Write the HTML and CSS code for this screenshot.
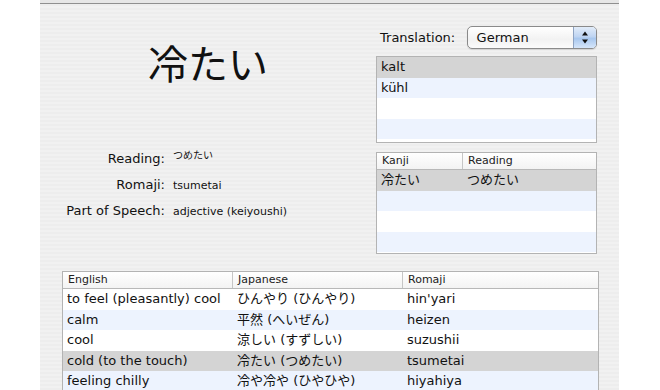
FILE: index.html
```html
<!DOCTYPE html>
<html lang="ja">
<head>
<meta charset="utf-8">
<title>冷たい</title>
<link rel="stylesheet" href="styles.css">
</head>
<body>
<div class="panel">
  <div class="topline"></div>
  <div class="top">
    <div class="left">
      <div class="title">冷たい</div>
      <div class="info">
        <div class="lbl">Reading:</div><div class="val reading">つめたい</div>
        <div class="lbl">Romaji:</div><div class="val">tsumetai</div>
        <div class="lbl">Part of Speech:</div><div class="val">adjective (keiyoushi)</div>
      </div>
    </div>
    <div class="right">
      <div class="trans-row">
        <span class="trans-label">Translation:</span>
        <div class="popup">
          <span class="popup-text">German</span>
          <span class="stepper">
            <svg width="22" height="21" viewBox="0 0 22 21"><path d="M8 8.5 L11 4.5 L14 8.5 Z" fill="#111"/><path d="M8 12.5 L11 16.5 L14 12.5 Z" fill="#111"/></svg>
          </span>
        </div>
      </div>
      <div class="list trans-list">
        <div class="row sel">kalt</div>
        <div class="row alt">kühl</div>
        <div class="row"></div>
        <div class="row alt"></div>
      </div>
      <div class="list kanji">
        <div class="thead"><span class="c-k">Kanji</span><span class="c-r">Reading</span></div>
        <div class="row sel"><span class="c-k">冷たい</span><span class="c-r">つめたい</span></div>
        <div class="row alt"></div>
        <div class="row"></div>
        <div class="row alt"></div>
      </div>
    </div>
  </div>
  <div class="list words">
    <div class="thead"><span class="c-e">English</span><span class="c-j">Japanese</span><span class="c-ro">Romaji</span></div>
    <div class="row"><span class="c-e">to feel (pleasantly) cool</span><span class="c-j">ひんやり (ひんやり)</span><span class="c-ro">hin'yari</span></div>
    <div class="row alt"><span class="c-e">calm</span><span class="c-j">平然 (へいぜん)</span><span class="c-ro">heizen</span></div>
    <div class="row"><span class="c-e">cool</span><span class="c-j">涼しい (すずしい)</span><span class="c-ro">suzushii</span></div>
    <div class="row sel"><span class="c-e">cold (to the touch)</span><span class="c-j">冷たい (つめたい)</span><span class="c-ro">tsumetai</span></div>
    <div class="row alt"><span class="c-e">feeling chilly</span><span class="c-j">冷や冷や (ひやひや)</span><span class="c-ro">hiyahiya</span></div>
  </div>
</div>
</body>
</html>
```
FILE: styles.css
```css
html, body {
  margin: 0;
  padding: 0;
  background: #ffffff;
}
body {
  font-family: "DejaVu Sans", "Noto Sans CJK JP", sans-serif;
  color: #111;
  height: 390px;
  overflow: hidden;
}
.panel {
  margin-left: 40px;
  width: 579px;
  height: 390px;
  background: repeating-linear-gradient(to bottom, #ededed 0 2px, #f1f1f1 2px 4px);
}
.topline {
  height: 3px;
  background: #e6e6e6;
  border-bottom: 1px solid #8f8f8f;
}
.top {
  display: flex;
  padding-top: 22px;
}
.left {
  width: 336px;
  display: flex;
  flex-direction: column;
}
.title {
  font-family: "Noto Sans CJK JP", sans-serif;
  font-size: 40px;
  line-height: 40px;
  text-align: center;
  margin-top: 16px;
  color: #111;
}
.info {
  display: grid;
  grid-template-columns: 125px auto;
  column-gap: 8px;
  grid-auto-rows: 26px;
  margin-top: 64px;
  align-items: baseline;
}
.lbl {
  font-size: 13px;
  line-height: 26px;
  text-align: right;
  color: #111;
}
.val {
  font-size: 11px;
  line-height: 26px;
  color: #111;
}
.val.reading {
  font-family: "Noto Sans CJK JP", sans-serif;
  font-size: 10px;
  line-height: 12px;
  align-self: start;
  margin-top: 3px;
}
.right {
  width: 221px;
  display: flex;
  flex-direction: column;
}
.trans-row {
  display: flex;
  align-items: center;
  height: 23px;
}
.trans-label {
  font-size: 13px;
  margin-left: 4px;
  width: 87px;
  color: #111;
}
.popup {
  width: 129px;
  height: 21px;
  border: 1px solid #8a8a8a;
  border-radius: 5px;
  background: linear-gradient(to bottom, #ffffff, #f2f2f2 60%, #fbfbfb);
  display: flex;
  align-items: center;
  overflow: hidden;
  box-shadow: 0 1px 1px rgba(0,0,0,0.12);
}
.popup-text {
  flex: 1;
  font-size: 13px;
  padding-left: 9px;
  color: #111;
}
.stepper {
  width: 22px;
  height: 21px;
  border-left: 1px solid #8ea3c2;
  background: linear-gradient(to bottom, #e2ecf9 0%, #bfd5f2 45%, #a8c7ee 55%, #d6e6fa 100%);
  display: flex;
}
.list {
  border: 1px solid #b3b3b3;
  background: #fff;
  font-size: 13px;
}
.trans-list {
  margin-top: 7px;
  height: 85px;
}
.kanji {
  margin-top: 9px;
  height: 100px;
}
.row {
  height: 20.5px;
  line-height: 20px;
  display: flex;
  padding-left: 4px;
  white-space: nowrap;
  color: #111;
}
.row.alt {
  background: #edf3fe;
}
.row.sel {
  background: #d4d4d4;
}
.thead {
  height: 16px;
  line-height: 16px;
  font-size: 11px;
  display: flex;
  background: linear-gradient(to bottom, #ffffff, #f3f3f3);
  border-bottom: 1px solid #b8b8b8;
  color: #222;
}
.thead span {
  padding-left: 5px;
  box-sizing: border-box;
}
.thead span + span {
  border-left: 1px solid #c6c6c6;
}
.kanji .c-k {
  width: 85px;
  flex: none;
}
.kanji .row .c-k {
  width: 81px;
}
.kanji .c-r {
  flex: 1;
}
.kanji .row .c-r {
  padding-left: 5px;
}
.words {
  margin-left: 22px;
  width: 535px;
  margin-top: 17px;
  border-bottom: none;
}
.words .c-e { width: 169px; flex: none; }
.words .c-j { width: 170px; flex: none; }
.words .c-ro { flex: 1; }
.words .row .c-e { width: 165px; }
.words .row .c-j { padding-left: 5px; box-sizing: border-box; }
.words .row .c-ro { padding-left: 5px; }
```
